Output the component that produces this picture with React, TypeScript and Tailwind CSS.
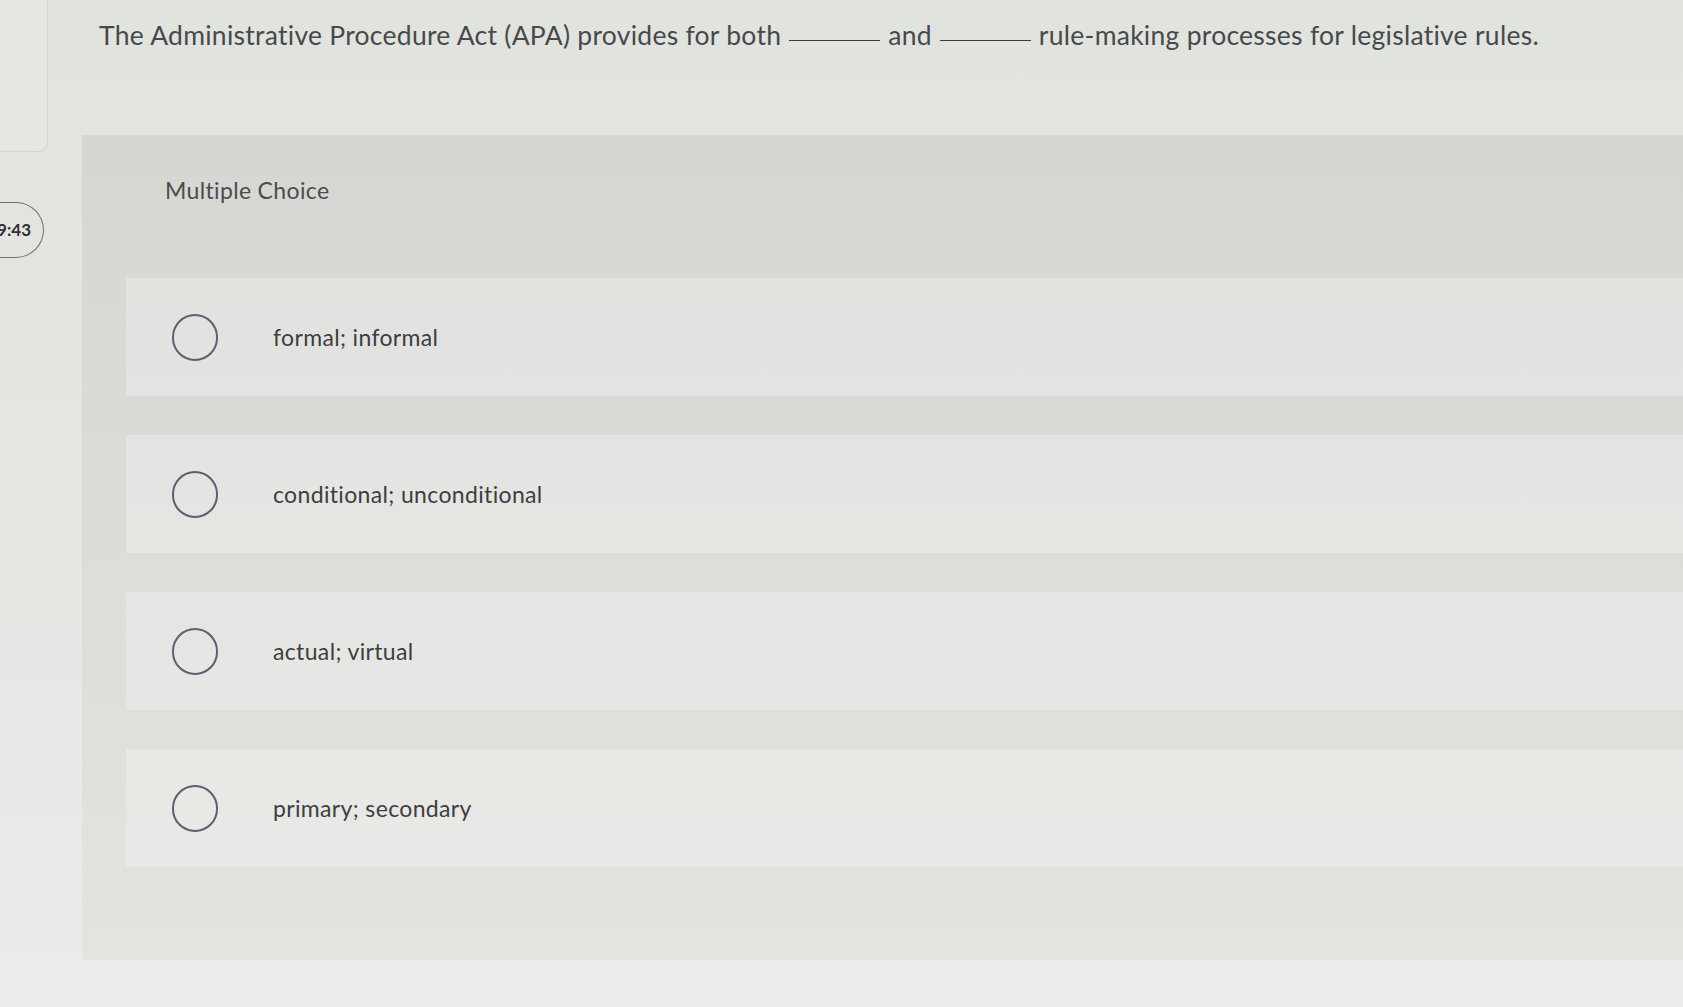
import React from "react";

type TOption = {
  id: string;
  label: string;
};

const options: TOption[] = [
  { id: "a", label: "formal; informal" },
  { id: "b", label: "conditional; unconditional" },
  { id: "c", label: "actual; virtual" },
  { id: "d", label: "primary; secondary" },
];

const Blank = () => (
  <span className="mx-[8px] inline-block w-[91px] translate-y-[-4px] border-b-[1.5px] border-[#3a3b3d] align-baseline" />
);

const OptionRow = ({ label }: { label: string }) => (
  <label className="flex h-[118px] cursor-pointer items-center bg-white/25 pl-[46px]">
    <span className="h-[47px] w-[46px] shrink-0 rounded-full border-2 border-[#596072]" />
    <span className="ml-[55px] text-[23px] leading-[28px] tracking-[0.015em] text-[#3d3e40]">{label}</span>
  </label>
);

export default function App() {
  return (
    <div className="flex h-screen w-full overflow-hidden bg-linear-to-b from-[#e1e3de] via-[#e5e6e2] to-[#ecedeb] font-['Lato','Liberation_Sans',sans-serif]">
      {/* left rail: cut-off panel and timer */}
      <aside className="flex w-[48px] shrink-0 flex-col">
        <div className="h-[152px] w-[48px] rounded-br-[10px] border-r border-b border-[#d3d5d0] bg-[#e5e7e2]" />
        <div className="mt-[50px] -ml-[20px] flex h-[56px] w-[64px] items-center justify-end rounded-r-full border-[1.5px] border-l-0 border-[#6f7171] pr-[12px]">
          <span className="text-[17px] font-bold text-[#2f3033]">9:43</span>
        </div>
      </aside>

      <main className="flex min-w-0 flex-1 flex-col">
        <p className="whitespace-nowrap pt-[20px] pl-[51px] text-[26.5px] leading-[30px] tracking-[0.01em] text-[#48494c]">
          The Administrative Procedure Act (APA) provides for both
          <Blank />
          and
          <Blank />
          rule-making processes for legislative rules.
        </p>

        <section className="mt-[85px] ml-[34px] flex h-[825px] flex-col bg-linear-to-b from-[#d6d7d3] via-[#dcddd9] to-[#e3e4e0] pb-[93px] pl-[44px]">
          <div className="h-[143px] pt-[41px] pl-[39px]">
            <span className="text-[23px] leading-[28px] tracking-[0.015em] text-[#4b4c4f]">Multiple Choice</span>
          </div>
          <div className="flex flex-col gap-[39px]">
            {options.map((option) => (
              <OptionRow key={option.id} label={option.label} />
            ))}
          </div>
        </section>
      </main>
    </div>
  );
}
